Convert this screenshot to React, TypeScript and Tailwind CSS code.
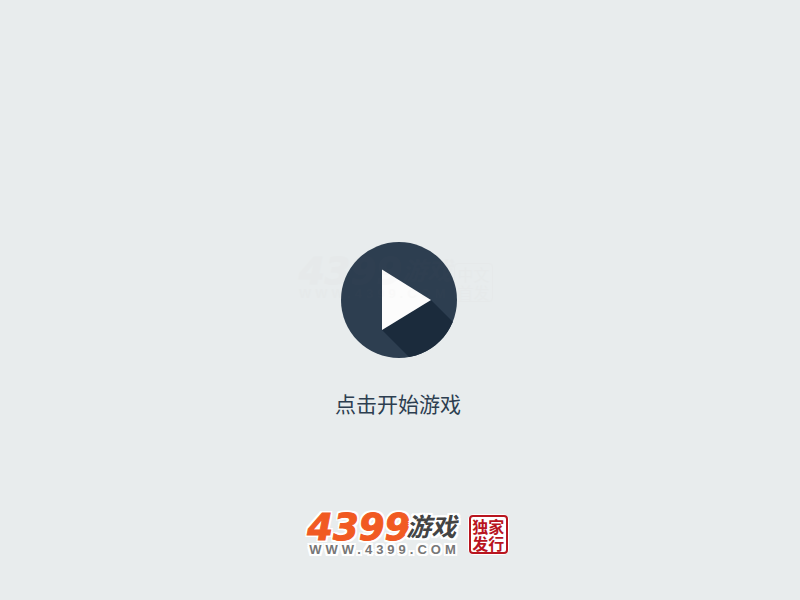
const halo =
  "[text-shadow:2px_0_#ffffff,-2px_0_#ffffff,0_2px_#ffffff,0_-2px_#ffffff,2px_2px_#ffffff,-2px_2px_#ffffff,2px_-2px_#ffffff,-2px_-2px_#ffffff]";

function PlayIcon() {
  return (
    <svg viewBox="0 0 116 116" className="size-[116px]" aria-hidden="true">
      <defs>
        <clipPath id="disc">
          <circle cx="58" cy="58" r="58" />
        </clipPath>
      </defs>
      <circle cx="58" cy="58" r="58" fill="#2d3e50" />
      <path d="M41 88 L90 58 L148 116 L69 116 Z" fill="#1b2b3c" clipPath="url(#disc)" />
      <path d="M41 27.500 L90 58 L41 88 Z" fill="#fcfcfc" />
    </svg>
  );
}

function Watermark() {
  return (
    <div
      aria-hidden="true"
      className="pointer-events-none absolute inset-x-0 top-4 flex items-end justify-center gap-0.5 pr-2 text-[#a09080] opacity-2"
    >
      <div className="flex flex-col">
        <div className="flex items-center font-['DejaVu_Sans','Noto_Sans_CJK_SC',sans-serif] font-bold italic">
          <span className="text-[37px] leading-[28px] [-webkit-text-stroke:1px_#a09080]">4399</span>
          <span className="text-[25px] leading-[28px]">游戏</span>
        </div>
        <span className="font-['Liberation_Sans',sans-serif] text-[13px] leading-[16px] font-bold tracking-[4px]">
          WWW.4399.COM
        </span>
      </div>
      <div className="grid size-[39px] place-content-center rounded-sm border border-[#a09080] font-['Noto_Sans_CJK_SC',sans-serif] text-[16px] leading-[18px]">
        <span>中文</span>
        <span>首发</span>
      </div>
    </div>
  );
}

function Seal() {
  return (
    <span className="mb-0.5 self-end rounded-md bg-white p-px">
      <span className="grid size-[39px] place-content-center rounded-sm border-2 border-[#b9151f] font-['Noto_Sans_CJK_SC',sans-serif] text-[16px] leading-[17px] font-bold text-[#b9151f]">
        <span>独家</span>
        <span>发行</span>
      </span>
    </span>
  );
}

function Logo() {
  return (
    <a href="#home" className="flex gap-2 pl-4">
      <span className="flex flex-col">
        <span
          className={`flex items-center font-['DejaVu_Sans','Noto_Sans_CJK_SC',sans-serif] font-bold italic ${halo}`}
        >
          <span className="text-[37px] leading-[30px] text-[#f15a22] [-webkit-text-stroke:1px_#f15a22]">
            4399
          </span>
          <span className="-ml-1 text-[25px] leading-[30px] text-[#444444]">游戏</span>
        </span>
        <span
          className={`pl-0.5 font-['Liberation_Sans',sans-serif] text-[13px] leading-[14px] font-bold tracking-[4px] text-[#777777] ${halo}`}
        >
          WWW.4399.COM
        </span>
      </span>
      <Seal />
    </a>
  );
}

export default function App() {
  return (
    <main className="grid min-h-screen grid-rows-[1fr_auto_1fr] justify-items-center bg-[#e8eced]">
      <div />
      <div className="relative flex w-full justify-center">
        <button type="button" aria-labelledby="start" className="mr-0.5 cursor-pointer rounded-full">
          <PlayIcon />
        </button>
        <Watermark />
      </div>
      <div className="flex flex-col items-center justify-between pt-[30px] pb-[43px]">
        <p
          id="start"
          className="pr-1 font-['Noto_Sans_CJK_SC',sans-serif] text-[21px] leading-[30px] text-[#2d3e50]"
        >
          点击开始游戏
        </p>
        <Logo />
      </div>
    </main>
  );
}
